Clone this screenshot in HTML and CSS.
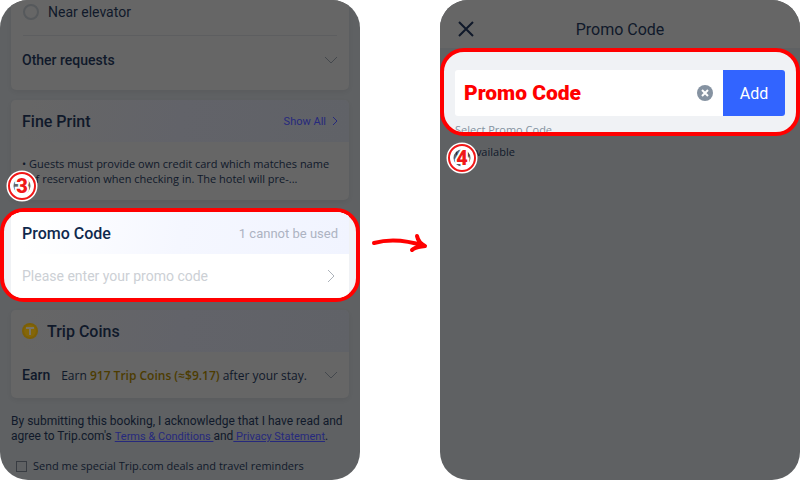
FILE: index.html
```
<!DOCTYPE html>
<html lang="en">
  <head>
    <meta charset="utf-8">
    <title>Promo Code</title>
    <link rel="stylesheet" href="styles.css">
  </head>
  <body>
    <main class="steps">
      <section class="phone booking">
        <div class="card requests">
          <label class="option"><input class="radio" type="radio" name="request"> Near elevator</label>
          <button class="row-btn">
            Other requests
            <svg class="icon" width="14" height="8" viewBox="0 0 14 8"><path d="M1 1l6 6 6-6" /></svg>
          </button>
        </div>

        <div class="card">
          <div class="card-head">
            <h2>Fine Print</h2>
            <a class="show-all" href="#">Show All
              <svg class="icon" width="6" height="10" viewBox="0 0 6 10"><path d="M1 1l4 4-4 4" /></svg>
            </a>
          </div>
          <ul class="policy">
            <li>Guests must provide own credit card which matches name of reservation when checking in. The hotel will pre-...</li>
          </ul>
          <svg class="badge" width="32" height="32" viewBox="0 0 32 32">
            <circle class="badge-halo" cx="16" cy="16" r="12" />
            <circle class="badge-ring" cx="16" cy="16" r="13" />
            <text x="16" y="23">3</text>
          </svg>
        </div>

        <div class="highlight promo">
          <div class="promo-card">
            <div class="card-head">
              <h2>Promo Code</h2>
              <span class="used">1 cannot be used</span>
            </div>
            <button class="row-btn enter-code">
              Please enter your promo code
              <svg class="icon" width="8" height="12" viewBox="0 0 8 12"><path d="M1 0l6 6-6 6" /></svg>
            </button>
          </div>
        </div>

        <div class="card">
          <div class="card-head coins-head">
            <svg width="16" height="16" viewBox="0 0 16 16">
              <circle cx="8" cy="8" r="8" fill="#7c5f06" />
              <circle cx="8" cy="8" r="6" fill="#846609" />
              <path d="M4 5h8M8 5v7" fill="none" stroke="#777368" stroke-width="2" />
            </svg>
            <h2>Trip Coins</h2>
          </div>
          <button class="row-btn earn">
            <b>Earn</b>
            <span class="earn-text">Earn <span class="coins">917 Trip Coins (≈$9.17)</span> after your stay.</span>
            <svg class="icon" width="14" height="8" viewBox="0 0 14 8"><path d="M1 1l6 6 6-6" /></svg>
          </button>
        </div>

        <p class="terms">By submitting this booking, I acknowledge that I have read and agree to Trip.com's <a href="#">Terms &amp; Conditions </a>and<a href="#"> Privacy Statement</a>.</p>
        <label class="deals"><input class="check" type="checkbox"> Send me special Trip.com deals and travel reminders</label>
      </section>

      <svg class="arrow" width="80" height="30" viewBox="0 0 80 30">
        <path d="M14 18C29 14 46 15 64 21M57 11c1 5 4 8 8 10c-5 1-10 1-13 4" />
      </svg>

      <section class="phone">
        <header class="title-bar">
          <button class="close" aria-label="Close">
            <svg width="16" height="16" viewBox="0 0 16 16"><path d="M1 1l14 14M15 1L1 15" /></svg>
          </button>
          <h1>Promo Code</h1>
        </header>

        <div class="highlight code-entry">
          <form class="code-form">
            <input class="code-input" type="text" value="Promo Code" aria-label="Promo code">
            <button class="clear" type="button" aria-label="Clear">
              <svg width="16" height="16" viewBox="0 0 16 16">
                <circle cx="8" cy="8" r="8" />
                <path d="M5 5l6 6M11 5l-6 6" />
              </svg>
            </button>
            <button class="add" type="button">Add</button>
          </form>
          <div class="select-title">Select Promo Code</div>
        </div>

        <div class="status">
          Unavailable
          <svg class="badge" width="32" height="32" viewBox="0 0 32 32">
            <circle class="badge-halo" cx="16" cy="16" r="12" />
            <circle class="badge-ring" cx="16" cy="16" r="13" />
            <text x="16" y="23">4</text>
          </svg>
        </div>
      </section>
    </main>
  </body>
</html>
```

FILE: styles.css
```
* {
  box-sizing: border-box;
}
body {
  margin: 0;
  background: #fff;
  font-family: Roboto, "Noto Sans", sans-serif;
  font-size: 14px;
  color: #10192a;
}
h1,
h2,
p,
ul {
  margin: 0;
}
button {
  border: none;
  background: none;
  padding: 0;
  font-family: inherit;
  color: inherit;
}
svg {
  flex: none;
}
.steps {
  display: flex;
  height: 100vh;
}
.phone {
  flex: 1;
  min-width: 0;
  overflow: hidden;
  border-radius: 28px;
  background: #5f6163;
}
.card {
  position: relative;
  margin: 0 11px 10px;
  border-radius: 5px;
  background: #666;
  box-shadow: 0 2px 5px rgba(0, 0, 0, 0.06);
}
.card-head {
  display: flex;
  align-items: center;
  justify-content: space-between;
  height: 42px;
  padding: 0 11px;
  border-radius: 5px 5px 0 0;
  background: linear-gradient(100deg, #666 5%, #626369 50%, #606267);
}
h2 {
  font-size: 16px;
  font-weight: 500;
}
.icon {
  fill: none;
  stroke: #44484d;
}
.row-btn {
  display: flex;
  align-items: center;
  justify-content: space-between;
  width: 100%;
  height: 46px;
  padding: 0 11px;
  font-size: 14px;
  text-align: left;
}

/* booking page */
.requests {
  padding-bottom: 6px;
}
.requests .row-btn {
  height: 48px;
  font-weight: 500;
}
.option {
  display: flex;
  align-items: center;
  gap: 9px;
  height: 36px;
  margin: 0 12px;
  padding-bottom: 12px;
  border-bottom: 1px solid #5d5e60;
}
.radio,
.check {
  appearance: none;
  margin: 0;
  border: 1px solid #383c42;
}
.radio {
  width: 16px;
  height: 16px;
  border: 2px solid #56595c;
  border-radius: 50%;
}
.show-all {
  display: flex;
  align-items: center;
  gap: 6px;
  font-size: 11px;
  color: #26297d;
  text-decoration: none;
}
.show-all .icon {
  stroke: #26297d;
}
.policy,
.deals,
.select-title,
.status {
  font-family: "Open Sans", sans-serif;
  font-size: 11px;
}
.policy {
  padding: 14px 11px 14px 18px;
  line-height: 15px;
  list-style: none;
}
.policy li::before {
  content: "•";
  float: left;
  margin-left: -7px;
}
.highlight {
  overflow: hidden;
  border: 4px solid #f00;
  border-radius: 24px;
  background: #f0f2f5;
}
.promo {
  margin-bottom: 8px;
  padding: 0 7px;
}
.booking .promo {
  margin-top: -2px;
}
.promo-card {
  background: #fff;
}
.promo .card-head {
  border-radius: 0;
  color: #0f294d;
  background: linear-gradient(100deg, #fff 5%, #f5f7ff 50%, #f1f4ff);
}
.used {
  font-size: 13px;
  color: #adb3c2;
}
.enter-code {
  height: 44px;
  color: #ccd0d5;
}
.enter-code .icon {
  margin-right: 3px;
  stroke: #adb3bb;
}
.coins-head {
  justify-content: flex-start;
  gap: 9px;
}
.earn b {
  font-weight: 500;
}
.earn-text {
  flex: 1;
  margin-left: 11px;
  font-family: "Open Sans", sans-serif;
  font-size: 12px;
}
.coins {
  font-weight: 600;
  color: #4d3c00;
}
.terms {
  margin: 16px 11px 12px;
  font-size: 12px;
  line-height: 15px;
}
.terms a {
  font-size: 11px;
  color: #26297d;
}
.deals {
  display: flex;
  align-items: center;
  gap: 6px;
  margin: 0 16px;
  line-height: 20px;
}
.check {
  width: 11px;
  height: 11px;
}

/* step numbers sit over the page */
.badge {
  position: absolute;
  left: -5px;
  bottom: -2px;
}
.badge circle {
  fill: none;
}
.badge-halo {
  stroke: #fff;
  stroke-width: 7px;
}
.badge-ring {
  stroke: #f01818;
  stroke-width: 2px;
}
.badge text {
  font-family: Roboto, sans-serif;
  font-size: 20px;
  font-weight: 900;
  text-anchor: middle;
  fill: #f01818;
  stroke: #fff;
  stroke-width: 4px;
  paint-order: stroke;
}
.arrow {
  align-self: center;
  fill: none;
  stroke: #f00;
  stroke-width: 4px;
  stroke-linecap: round;
  stroke-linejoin: round;
}

/* promo code page */
.title-bar {
  display: grid;
  grid-template-columns: 16px 1fr 16px;
  align-items: center;
  height: 48px;
  padding: 10px 18px 0;
  background: #666;
}
.title-bar h1 {
  font-size: 16px;
  font-weight: 400;
  text-align: center;
}
.close {
  display: flex;
}
.close path {
  stroke: #10192a;
  stroke-width: 2px;
}
.code-entry {
  height: 88px;
  padding: 18px 11px 0;
}
.code-form {
  display: flex;
  align-items: center;
  height: 46px;
  border-radius: 3px;
  overflow: hidden;
  background: #fff;
}
.code-input {
  flex: 1;
  min-width: 0;
  padding: 0 9px;
  border: none;
  outline: none;
  font-family: inherit;
  font-size: 21px;
  font-weight: 900;
  color: #f00;
}
.clear {
  display: flex;
  margin: 0 10px;
}
.clear circle {
  fill: #8592a1;
}
.clear path {
  stroke: #fff;
  stroke-width: 2px;
}
.add {
  width: 62px;
  height: 100%;
  font-size: 16px;
  color: #fff;
  background: #3264ff;
}
.select-title {
  line-height: 28px;
  color: #8592a1;
}
.status {
  position: relative;
  padding: 8px 15px;
  line-height: 16px;
}
.status .badge {
  left: 6px;
  bottom: -6px;
}
```
